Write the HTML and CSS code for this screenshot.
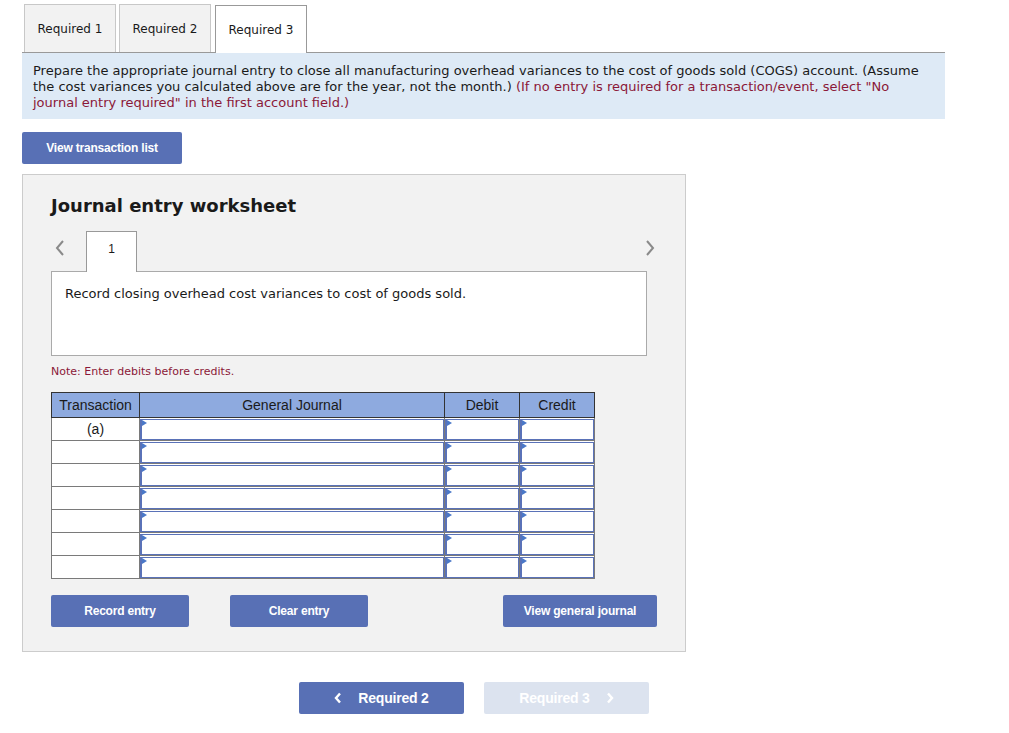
FILE: index.html
```html
<!DOCTYPE html>
<html lang="en">
<head>
  <meta charset="UTF-8">
  <title>Required 3</title>
  <link rel="stylesheet" href="styles.css">
</head>
<body>

<div class="page">
  <!-- Tabs -->
  <div class="tabs">
    <div class="tab">Required 1</div>
    <div class="tab">Required 2</div>
    <div class="tab active">Required 3</div>
  </div>

  <div class="instructions">
    Prepare the appropriate journal entry to close all manufacturing overhead variances to the cost of goods sold (COGS) account. (Assume the cost variances you calculated above are for the year, not the month.) <span class="red">(If no entry is required for a transaction/event, select "No journal entry required" in the first account field.)</span>
  </div>

  <button class="btn btn-list">View transaction list</button>

  <div class="worksheet">
    <h2>Journal entry worksheet</h2>

    <div class="pager">
      <span class="arrow">
        <svg width="10" height="16" viewBox="0 0 10 16"><path d="M8 1 L2 8 L8 15" fill="none" stroke="#8a8a8a" stroke-width="2"/></svg>
      </span>
      <div class="page-tab">1</div>
      <span class="arrow arrow-right">
        <svg width="10" height="16" viewBox="0 0 10 16"><path d="M2 1 L8 8 L2 15" fill="none" stroke="#8a8a8a" stroke-width="2"/></svg>
      </span>
    </div>

    <div class="desc">Record closing overhead cost variances to cost of goods sold.</div>

    <p class="note">Note: Enter debits before credits.</p>

    <table class="journal">
      <thead>
        <tr>
          <th class="c-trans">Transaction</th>
          <th class="c-acct">General Journal</th>
          <th class="c-num">Debit</th>
          <th class="c-num">Credit</th>
        </tr>
      </thead>
      <tbody>
        <tr>
          <td class="trans">(a)</td>
          <td class="field"><div class="box"></div></td>
          <td class="field"><div class="box"></div></td>
          <td class="field"><div class="box"></div></td>
        </tr>
        <tr>
          <td class="trans"></td>
          <td class="field"><div class="box"></div></td>
          <td class="field"><div class="box"></div></td>
          <td class="field"><div class="box"></div></td>
        </tr>
        <tr>
          <td class="trans"></td>
          <td class="field"><div class="box"></div></td>
          <td class="field"><div class="box"></div></td>
          <td class="field"><div class="box"></div></td>
        </tr>
        <tr>
          <td class="trans"></td>
          <td class="field"><div class="box"></div></td>
          <td class="field"><div class="box"></div></td>
          <td class="field"><div class="box"></div></td>
        </tr>
        <tr>
          <td class="trans"></td>
          <td class="field"><div class="box"></div></td>
          <td class="field"><div class="box"></div></td>
          <td class="field"><div class="box"></div></td>
        </tr>
        <tr>
          <td class="trans"></td>
          <td class="field"><div class="box"></div></td>
          <td class="field"><div class="box"></div></td>
          <td class="field"><div class="box"></div></td>
        </tr>
        <tr>
          <td class="trans"></td>
          <td class="field"><div class="box"></div></td>
          <td class="field"><div class="box"></div></td>
          <td class="field"><div class="box"></div></td>
        </tr>
      </tbody>
    </table>

    <div class="actions">
      <button class="btn btn-action">Record entry</button>
      <button class="btn btn-action btn-clear">Clear entry</button>
      <button class="btn btn-action btn-view">View general journal</button>
    </div>
  </div>

  <div class="nav">
    <button class="btn btn-nav">
      <svg class="chev" width="8" height="12" viewBox="0 0 8 12"><path d="M6 1.5 L2 6 L6 10.5" fill="none" stroke="#fff" stroke-width="2.4"/></svg>
      Required 2
    </button>
    <button class="btn btn-nav disabled">
      Required 3
      <svg class="chev" width="8" height="12" viewBox="0 0 8 12"><path d="M2 1.5 L6 6 L2 10.5" fill="none" stroke="#fff" stroke-width="2.4"/></svg>
    </button>
  </div>
</div>

</body>
</html>
```

FILE: styles.css
```css
body {
  margin: 0;
  background-color: #fff;
  font-family: "DejaVu Sans", Verdana, sans-serif;
  color: #1a1a1a;
}

.page {
  padding: 4px 0 0 22px;
  width: 923px;
}

.tabs {
  display: flex;
  gap: 3px;
  padding-left: 2px;
}

.tab {
  width: 90px;
  height: 47px;
  line-height: 48px;
  text-align: center;
  font-size: 12px;
  background-color: #f2f2f2;
  border: 1px solid #c8c8c8;
  border-bottom: none;
}

.tab.active {
  background-color: #fff;
  border-color: #999;
  margin-left: 1px;
  position: relative;
  top: 1px;
}

.instructions {
  background-color: #deeaf6;
  border-top: 1px solid #999;
  padding: 10px 11px 8px;
  font-size: 13px;
  line-height: 16px;
  color: #1a1a1a;
}

.red {
  color: #8b1838;
}

.btn {
  font-family: "Liberation Sans", Arial, sans-serif;
  font-weight: bold;
  font-size: 12px;
  color: #fff;
  background-color: #5870b5;
  border: none;
  border-radius: 2px;
  cursor: pointer;
  letter-spacing: -0.2px;
}

.btn-list {
  margin-top: 13px;
  width: 160px;
  height: 32px;
}

.worksheet {
  margin-top: 10px;
  width: 634px;
  background-color: #f2f2f2;
  border: 1px solid #ccc;
  padding: 0 0 24px 28px;
}

.worksheet h2 {
  margin: 0;
  padding-top: 20px;
  font-size: 18px;
  line-height: 22px;
  font-weight: bold;
}

.pager {
  display: flex;
  align-items: flex-end;
  margin-top: 14px;
  width: 606px;
}

.arrow {
  width: 35px;
  padding-left: 4px;
  align-self: center;
  height: 16px;
  margin-top: -6px;
}

.arrow-right {
  margin-left: auto;
  width: auto;
  padding: 0 2px 0 0;
}

.page-tab {
  width: 49px;
  height: 40px;
  line-height: 34px;
  text-align: center;
  font-family: "Liberation Sans", Arial, sans-serif;
  font-size: 12px;
  background-color: #fff;
  border: 1px solid #999;
  border-bottom: none;
  margin-bottom: -1px;
  margin-left: -4px;
  position: relative;
  z-index: 1;
}

.desc {
  width: 568px;
  height: 57px;
  background-color: #fff;
  border: 1px solid #aaa;
  padding: 14px 13px 12px;
  font-size: 13px;
  line-height: 16px;
}

.note {
  margin: 9px 0 14px;
  font-size: 11px;
  color: #8b1838;
}

.journal {
  border-collapse: collapse;
  width: 544px;
  font-family: "Liberation Sans", Arial, sans-serif;
  font-size: 14px;
  background-color: #fff;
}

.journal th {
  background-color: #8eaadf;
  border: 1px solid #333;
  height: 24px;
  font-weight: normal;
  color: #1a1a1a;
  padding: 0;
}

.journal td {
  height: 22px;
  border: 1px solid #7a7a7a;
  padding: 0;
}

.c-trans {
  width: 87px;
}

.c-acct {
  width: 304px;
}

.c-num {
  width: 74px;
}

.trans {
  text-align: center;
  vertical-align: top;
  line-height: 22px;
}

.box {
  position: relative;
  height: 19px;
  border: 1px solid #5a72b8;
  border-left-width: 2px;
  background-color: #fff;
}

.box::before {
  content: "";
  position: absolute;
  left: 0;
  top: 0;
  border-top: 3px solid transparent;
  border-bottom: 3px solid transparent;
  border-left: 5px solid #4a78c8;
}

.actions {
  display: flex;
  gap: 41px;
  margin-top: 16px;
  width: 606px;
}

.btn-action {
  width: 138px;
  height: 32px;
}

.btn-view {
  width: 154px;
  margin-left: auto;
}

.nav {
  display: flex;
  gap: 20px;
  margin: 30px 0 0 277px;
}

.btn-nav {
  width: 165px;
  height: 32px;
  font-size: 14px;
  display: flex;
  align-items: center;
  justify-content: center;
  gap: 16px;
}

.btn-nav.disabled {
  background-color: #dce3ef;
  color: #fff;
}
```
